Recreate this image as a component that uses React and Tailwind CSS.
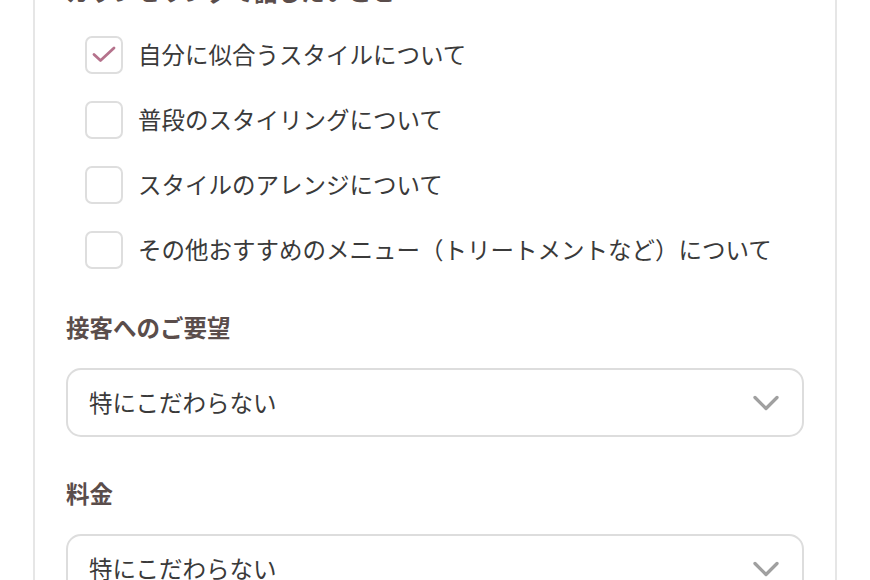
import { ChevronDown } from "lucide-react";

const options = [
  { label: "自分に似合うスタイルについて", checked: true },
  { label: "普段のスタイリングについて", checked: false },
  { label: "スタイルのアレンジについて", checked: false },
  { label: "その他おすすめのメニュー（トリートメントなど）について", checked: false },
];

function Checkbox({ checked }) {
  return (
    <span className="flex h-[38px] w-[38px] shrink-0 items-center justify-center rounded-[7px] border-2 border-[#dedede] bg-white">
      {checked && (
        <svg width="24" height="18" viewBox="0 0 24 18" fill="none">
          <path d="M2 8.5 L8.5 14.5 L22 2" stroke="#b5728c" strokeWidth="2.8" strokeLinecap="round" strokeLinejoin="round" />
        </svg>
      )}
    </span>
  );
}

function SelectBox({ value }) {
  return (
    <div className="flex h-[69px] w-[738px] shrink-0 items-center justify-between rounded-[15px] border-2 border-[#dddddd] bg-white pl-[21px] pr-[14px]">
      <span className="text-[23.5px] text-[#3a3a3a]">{value}</span>
      <ChevronDown className="h-[44px] w-[44px] text-[#a0a0a0]" strokeWidth={1.8} />
    </div>
  );
}

export default function App() {
  return (
    <div
      className="h-[580px] w-full overflow-hidden bg-white"
      style={{ fontFamily: '"Noto Sans CJK JP", "Noto Sans", sans-serif' }}
    >
      <div className="ml-[33px] flex h-full w-[804px] flex-col border-x-2 border-[#e6e6e6] pl-[31px]">
        <h3 className="mt-[-25px] flex h-[34px] shrink-0 items-center text-[23.5px] font-bold text-[#5a4d4b]">
          カウンセリングで話したいこと
        </h3>

        <ul className="mt-[27px] flex flex-col gap-[27px] pl-[19px]">
          {options.map((o) => (
            <li key={o.label} className="flex h-[38px] items-center gap-[15px]">
              <Checkbox checked={o.checked} />
              <span className="text-[23.5px] text-[#3a3a3a]">{o.label}</span>
            </li>
          ))}
        </ul>

        <h3 className="mt-[42px] flex h-[34px] shrink-0 items-center text-[23.5px] font-bold text-[#5a4d4b]">
          接客へのご要望
        </h3>
        <div className="mt-[23px]">
          <SelectBox value="特にこだわらない" />
        </div>

        <h3 className="mt-[40px] flex h-[34px] shrink-0 items-center text-[23.5px] font-bold text-[#5a4d4b]">
          料金
        </h3>
        <div className="mt-[23px]">
          <SelectBox value="特にこだわらない" />
        </div>
      </div>
    </div>
  );
}
